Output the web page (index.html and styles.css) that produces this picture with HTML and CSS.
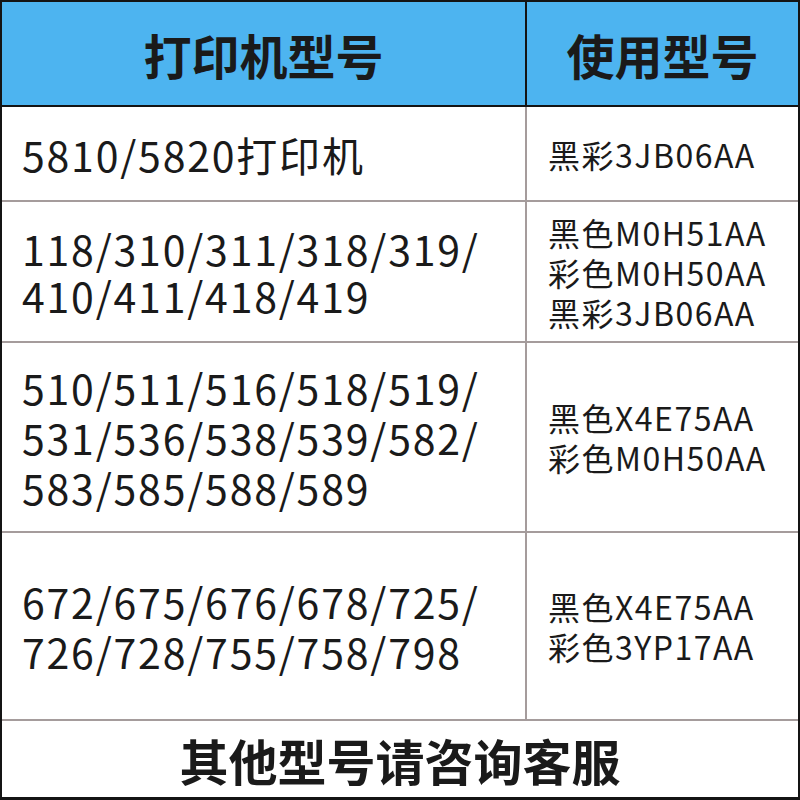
FILE: index.html
```html
<!DOCTYPE html>
<html lang="zh-CN">
<head>
<meta charset="utf-8">
<link rel="stylesheet" href="styles.css">
</head>
<body>
<div class="sheet">
  <div class="row head">
    <div class="cell left">打印机型号</div>
    <div class="cell right">使用型号</div>
  </div>
  <div class="row r1">
    <div class="cell left">5810/5820打印机</div>
    <div class="cell right">黑彩3JB06AA</div>
  </div>
  <div class="row r2">
    <div class="cell left tight">118/310/311/318/319/<br>410/411/418/419</div>
    <div class="cell right">黑色M0H51AA<br>彩色M0H50AA<br>黑彩3JB06AA</div>
  </div>
  <div class="row r3">
    <div class="cell left">510/511/516/518/519/<br>531/536/538/539/582/<br>583/585/588/589</div>
    <div class="cell right">黑色X4E75AA<br>彩色M0H50AA</div>
  </div>
  <div class="row r4">
    <div class="cell left">672/675/676/678/725/<br>726/728/755/758/798</div>
    <div class="cell right">黑色X4E75AA<br>彩色3YP17AA</div>
  </div>
  <div class="foot">其他型号请咨询客服</div>
</div>
</body>
</html>
```
FILE: styles.css
```css
html, body {
  margin: 0;
  padding: 0;
  background: #ffffff;
}
.sheet {
  width: 800px;
  height: 800px;
  box-sizing: border-box;
  border: 2px solid #141414;
  border-bottom-width: 3px;
  display: flex;
  flex-direction: column;
  font-family: "Noto Sans CJK SC", "Noto Sans", sans-serif;
  color: #1a1a1a;
}
.row {
  display: flex;
  box-sizing: border-box;
  border-bottom: 2px solid #a59c9c;
  flex-shrink: 0;
}
.cell {
  display: flex;
  align-items: center;
  box-sizing: border-box;
}
.left {
  width: 525px;
  border-right: 2px solid #a59c9c;
  padding-left: 20px;
  font-size: 41px;
  letter-spacing: 1.8px;
  line-height: 50px;
}
.left.tight {
  line-height: 47px;
}
.right {
  flex: 1;
  padding-left: 21px;
  font-size: 32px;
  letter-spacing: 1.5px;
  line-height: 40px;
}
.head {
  height: 105px;
  background: #4db4f0;
  border-bottom-color: #141414;
}
.head .cell {
  justify-content: center;
  padding-left: 0;
  font-size: 48px;
  letter-spacing: 0;
  font-weight: 700;
}
.head .left {
  border-right-color: #141414;
}
.r1 { height: 95px; }
.r2 { height: 141px; }
.r3 { height: 190px; }
.r4 { height: 188px; }
.foot {
  flex: 1;
  display: flex;
  align-items: center;
  justify-content: center;
  font-size: 49px;
  font-weight: 700;
}
```
